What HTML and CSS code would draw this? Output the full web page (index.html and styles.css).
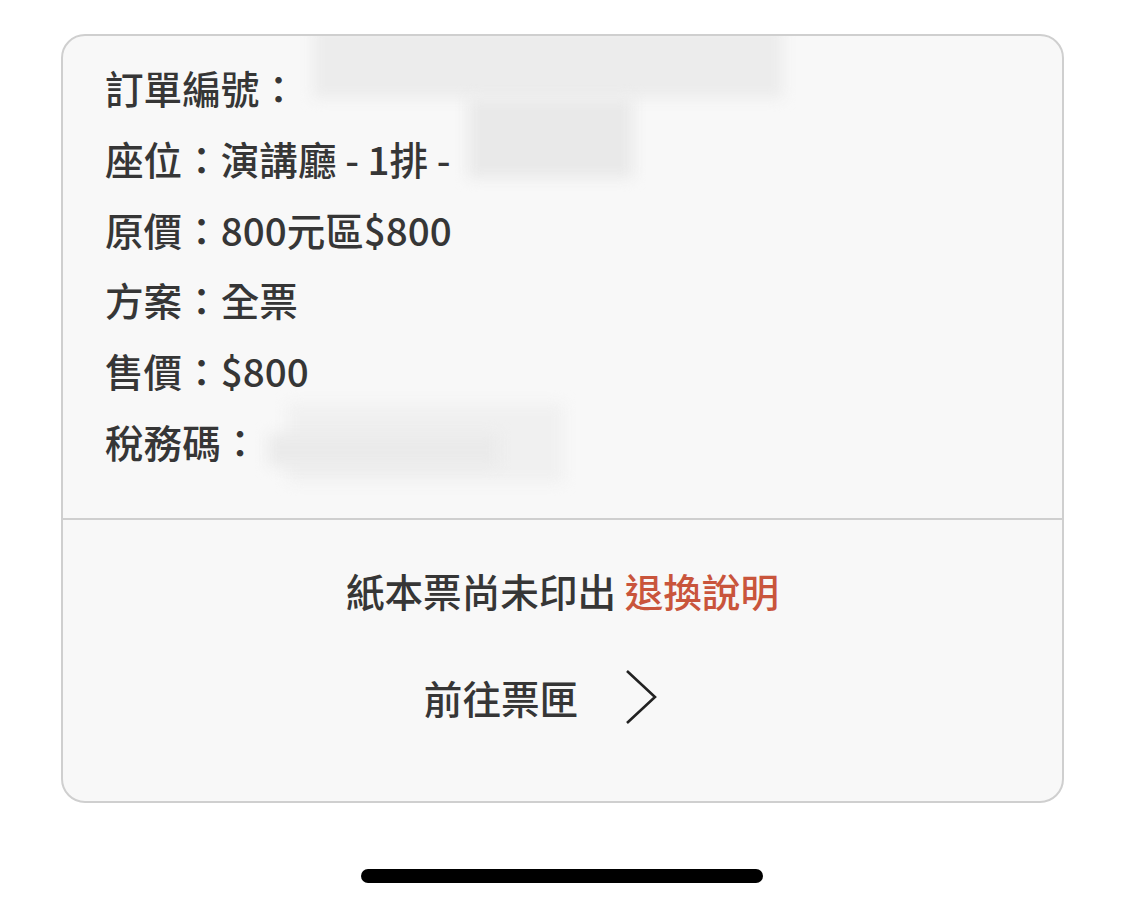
FILE: index.html
```html
<html lang="zh-Hant">
<head>
<meta name="viewport" content="width=device-width, initial-scale=1">
<title>票券資訊</title>
<link rel="stylesheet" href="styles.css">
</head>
<body>
        <div class="ticket">
            <div class="info">
                <p>訂單編號：</p>
                <p>座位：演講廳 - 1排 -</p>
                <p>原價：800元區$800</p>
                <p>方案：全票</p>
                <p>售價：$800</p>
                <p>稅務碼：</p>
                <span class="redact r1"></span>
                <span class="redact r2"></span>
                <span class="redact r3"></span>
                <span class="redact r4"></span>
            </div>
            <div class="actions">
                <p>紙本票尚未印出 <a href="#">退換說明</a></p>
                <a class="go" href="#">
                    <span>前往票匣</span>
                    <svg width="32" height="56" viewBox="0 0 32 56"><path d="M2 2 L30 28 L2 54" fill="none" stroke="#222" stroke-width="2.6"/></svg>
                </a>
            </div>
        </div>
        <div class="home-bar"></div>
</body>
</html>
```

FILE: styles.css
```css
body {
    margin: 0;
    padding: 0;
    background: white;
    color: #363636;
    font-family: "Noto Sans CJK TC", "Noto Sans", sans-serif;
    font-size: 38.6px;
    font-weight: 500;
}
p {
    margin: 0;
}
.ticket {
    width: 999px;
    margin: 34px 0 0 61px;
    border: 2px solid #cfcfcf;
    border-radius: 24px;
    background: #f8f8f8;
    overflow: hidden;
}
.info {
    position: relative;
    padding: 16px 42px 41px;
    border-bottom: 2px solid #cfcfcf;
}
.info p {
    line-height: 70.8px;
}
.redact {
    position: absolute;
    display: block;
    filter: blur(7px);
}
.r1 {
    left: 250px;
    top: -10px;
    width: 470px;
    height: 72px;
    background: #ececec;
}
.r2 {
    left: 405px;
    top: 62px;
    width: 165px;
    height: 80px;
    background: #e9e9e9;
}
.r3 {
    left: 225px;
    top: 368px;
    width: 275px;
    height: 78px;
    background: #f0f0f0;
}
.r4 {
    left: 205px;
    top: 398px;
    width: 230px;
    height: 32px;
    background: #eaeaea;
}
.actions {
    display: flex;
    flex-direction: column;
    align-items: center;
    gap: 36px;
    padding: 35px 0 68px;
}
.actions p {
    line-height: 71px;
}
.actions p a {
    color: #c9553c;
    text-decoration: none;
}
.go {
    display: flex;
    align-items: center;
    height: 71px;
    color: #363636;
    text-decoration: none;
}
.go svg {
    margin-left: 47px;
    margin-right: 44px;
}
.home-bar {
    width: 402px;
    height: 14px;
    margin: 66px auto 0;
    border-radius: 7px;
    background: black;
}
```
